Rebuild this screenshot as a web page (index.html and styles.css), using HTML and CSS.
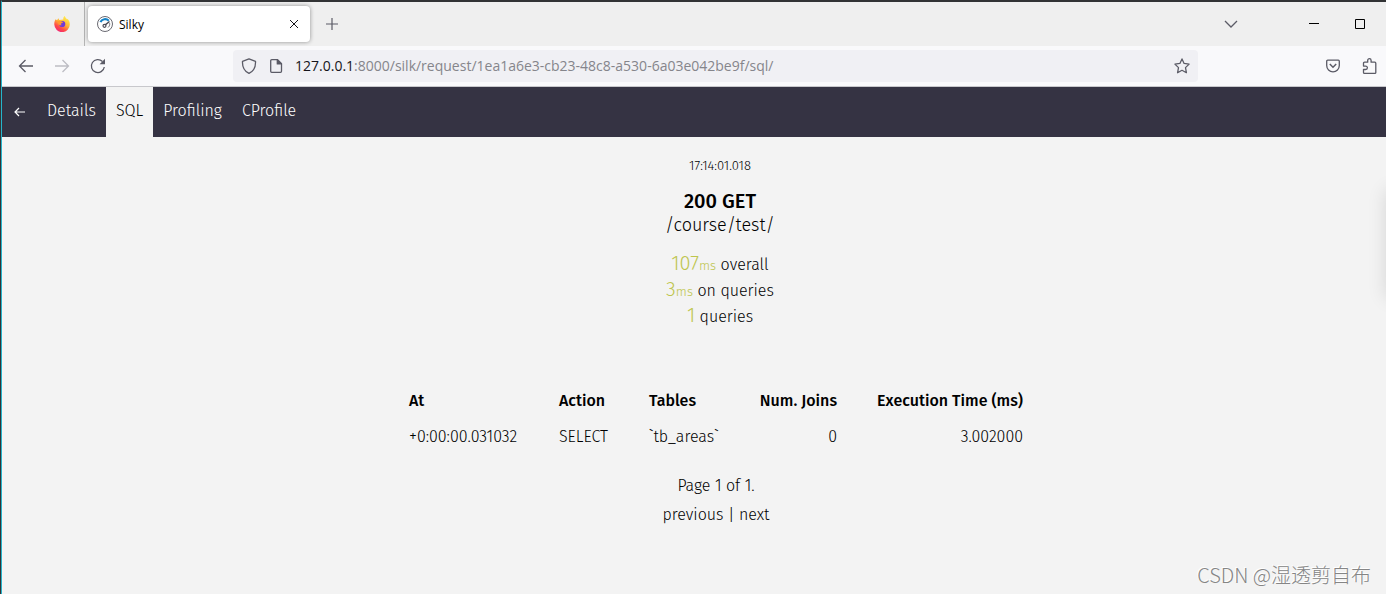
FILE: index.html
```html
<!DOCTYPE html>
<html lang="en">
<head>
  <meta charset="UTF-8">
  <meta name="viewport" content="width=device-width, initial-scale=1.0">
  <title>Silky</title>
  <link rel="stylesheet" href="styles.css">
</head>
<body>
  <div class="window">
    <div class="tab-strip">
      <div class="pinned">
        <svg width="16" height="16" viewBox="0 0 16 16">
          <defs>
            <linearGradient id="flame" x1="0.85" y1="0.05" x2="0.3" y2="1">
              <stop offset="0" stop-color="#fff44f"/>
              <stop offset="0.45" stop-color="#ffb436"/>
              <stop offset="0.75" stop-color="#ff4a48"/>
              <stop offset="1" stop-color="#f0287a"/>
            </linearGradient>
          </defs>
          <path fill="url(#flame)" d="M1.600 3.200 3 4.300 4.400 2.200 5.300 4l4-.6C9.200 2 9.600.8 10.800 0c.4 1.500 1.300 2.300 2.200 3.300l.8-.3c1.300 1.600 2 3.300 2 5.200A7.700 7.700 0 0 1 .3 8.600C.2 6.600.7 4.700 1.600 3.200Z"/>
          <circle cx="8.200" cy="8" r="3.100" fill="#7139d9"/>
          <path fill="#ff9a2e" d="M3.600 5.200c1.400-.8 2.700-.7 4 .3l1.500.4c-.2.9-1.100 1-1.800 1.400-.7.500-.5 1.400.6 1.800-1.800.7-3.700-.1-4.300-3.900Z"/>
        </svg>
      </div>
      <div class="tab">
        <svg width="18" height="18" viewBox="0 0 18 18" fill="none">
          <circle cx="9" cy="9" r="7.500" stroke="#6a6a72"/>
          <path d="M4.500 7.200c1.200-3.300 5.800-4 8.300-1.500" stroke="#1583c7" stroke-width="2.200"/>
          <path d="m9.200 9.900 4.300-3.400" stroke="#4a4a55" stroke-width="1.400"/>
          <path d="M13.700 8.200c.2 1.900-.5 3.300-1.700 4.300" stroke="#6a6a72"/>
          <circle cx="8.500" cy="10.800" r="1.500" stroke="#4a4a55" stroke-width="1.200"/>
        </svg>
        <span class="tab-title">Silky</span>
        <button class="icon-btn" aria-label="Close tab">
          <svg width="10" height="10" viewBox="0 0 10 10"><path d="m1 1 8 8M9 1 1 9" stroke="#15141a"/></svg>
        </button>
      </div>
      <button class="icon-btn new-tab" aria-label="New tab">
        <svg width="12" height="12" viewBox="0 0 12 12"><path d="M6 0v12M0 6h12" stroke="#5b5b66" stroke-width="1.200"/></svg>
      </button>
      <div class="window-controls">
        <button class="icon-btn" aria-label="List all tabs">
          <svg width="14" height="14" viewBox="0 0 14 14" fill="none"><path d="m1 4 6 6 6-6" stroke="#5b5b66" stroke-width="1.300"/></svg>
        </button>
        <button class="icon-btn minimize" aria-label="Minimize">
          <svg width="10" height="10" viewBox="0 0 10 10"><path d="M0 4.500h10" stroke="#000"/></svg>
        </button>
        <button class="icon-btn" aria-label="Maximize">
          <svg width="10" height="10" viewBox="0 0 10 10" fill="none"><path d="M.5.5h9v9h-9z" stroke="#000"/></svg>
        </button>
      </div>
    </div>

    <div class="toolbar">
      <div class="history">
        <button class="icon-btn" aria-label="Back">
          <svg width="16" height="16" viewBox="0 0 16 16" fill="none" stroke="#5b5b66" stroke-width="1.300"><path d="M15 8H1.500M7.500 2l-6 6 6 6"/></svg>
        </button>
        <button class="icon-btn" aria-label="Forward" disabled>
          <svg width="16" height="16" viewBox="0 0 16 16" fill="none" stroke="#bdbdc3" stroke-width="1.300"><path d="M1 8h13.500M8.500 2l6 6-6 6"/></svg>
        </button>
        <button class="icon-btn" aria-label="Reload">
          <svg width="16" height="16" viewBox="0 0 16 16" fill="none"><path d="M14.300 9A6.500 6.500 0 1 1 12.500 3.500" stroke="#5b5b66" stroke-width="1.300"/><path d="M15 .8v5.400H9.600z" fill="#5b5b66"/></svg>
        </button>
      </div>
      <div class="url-bar">
        <svg width="16" height="16" viewBox="0 0 16 16" fill="none" stroke="#5b5b66" stroke-width="1.300" stroke-linejoin="round"><path d="M8 .8 14.500 3.300c.3 5.400-1.800 9.800-6.500 12.100C3.300 13.100 1.200 8.700 1.500 3.300Z"/></svg>
        <svg width="14" height="14" viewBox="0 0 14 14" fill="none" stroke="#5b5b66" stroke-width="1.300" stroke-linejoin="round"><path d="M2.700.7h5.800l4 4v7.600a1 1 0 0 1-1 1H2.700a1 1 0 0 1-1-1V1.700a1 1 0 0 1 1-1Z"/><path d="M8.300.8v4.100h4.200z" fill="#5b5b66"/></svg>
        <a class="url" href="#"><span class="host">127.0.0.1</span>:8000/silk/request/1ea1a6e3-cb23-48c8-a530-6a03e042be9f/sql/</a>
        <button class="icon-btn" aria-label="Bookmark this page">
          <svg width="16" height="16" viewBox="0 0 16 16" fill="none" stroke="#5b5b66" stroke-width="1.300" stroke-linejoin="round"><path d="m8 .9 2.100 4.500 5 .7-3.600 3.500.9 5.100L8 12.300l-4.400 2.400.9-5.100L.9 6.100l5-.7z"/></svg>
        </button>
      </div>
      <div class="extras">
        <button class="icon-btn" aria-label="Save to Pocket">
          <svg width="14" height="14" viewBox="0 0 14 14" fill="none" stroke="#5b5b66" stroke-width="1.300"><path d="M1.700 1.200h10.600a1 1 0 0 1 1 1v4.300a6.300 6.300 0 0 1-12.600 0V2.200a1 1 0 0 1 1-1Z"/><path d="M3.800 5 7 8.200 10.200 5" stroke-width="1.500"/></svg>
        </button>
        <button class="icon-btn" aria-label="Extensions">
          <svg width="16" height="16" viewBox="0 0 16 16" fill="none" stroke="#5b5b66" stroke-width="1.300" stroke-linejoin="round"><path d="M5.700 4.200V2.400a1.700 1.700 0 0 1 3.400 0v1.800h3.700a1 1 0 0 1 1 1v9.200a1 1 0 0 1-1 1H2.500a1 1 0 0 1-1-1v-2.900h2.200a1.700 1.700 0 0 0 0-3.400H1.500V5.200a1 1 0 0 1 1-1Z"/></svg>
        </button>
      </div>
    </div>

    <nav class="menu">
      <a href="#" aria-label="Back to requests">
        <svg width="15" height="10" viewBox="0 0 15 10" fill="none" stroke="#fff" stroke-width="1.200"><path d="M13 5H3M7 1 3 5l4 4"/></svg>
      </a>
      <a href="#">Details</a>
      <a href="#" class="selected">SQL</a>
      <a href="#">Profiling</a>
      <a href="#">CProfile</a>
    </nav>

    <main>
      <div class="summary">
        <div class="time">17:14:01.018</div>
        <div class="method">200 GET</div>
        <div class="path">/course/test/</div>
        <div class="metric"><span class="numeric">107</span><span class="unit">ms</span> overall</div>
        <div class="metric"><span class="numeric">3</span><span class="unit">ms</span> on queries</div>
        <div class="metric"><span class="numeric">1</span> queries</div>
      </div>

      <div class="queries">
        <table>
          <thead>
            <tr>
              <th class="col-at">At</th>
              <th class="col-action">Action</th>
              <th class="col-tables">Tables</th>
              <th class="col-joins right">Num. Joins</th>
              <th class="col-time right">Execution Time (ms)</th>
            </tr>
          </thead>
          <tbody>
            <tr>
              <td>+0:00:00.031032</td>
              <td>SELECT</td>
              <td>`tb_areas`</td>
              <td class="right">0</td>
              <td class="right">3.002000</td>
            </tr>
          </tbody>
        </table>
        <div class="pagination">
          <div>Page 1 of 1.</div>
          <div><a href="#">previous</a> | <a href="#">next</a></div>
        </div>
      </div>
    </main>
    <div class="side-panel"></div>
    <div class="watermark">CSDN @湿透剪自布</div>
  </div>
</body>
</html>
```
FILE: styles.css
```css
* {
  box-sizing: border-box;
}

body {
  margin: 0;
  background: #323335;
  font-family: "Fira Sans", "Noto Sans", sans-serif;
  font-weight: 300;
  color: #000;
}

a {
  color: inherit;
  text-decoration: none;
}

svg {
  display: block;
  flex-shrink: 0;
}

.window {
  position: relative;
  display: flex;
  flex-direction: column;
  min-height: 100vh;
  margin-left: 1px;
  border-top: 2px solid #323335;
  border-left: 1px solid #25b5cc;
  background: #f3f3f3;
  overflow: hidden;
}

.icon-btn {
  display: flex;
  align-items: center;
  justify-content: center;
  padding: 0;
  border: none;
  background: none;
}

/* Browser tabs */
.tab-strip {
  display: flex;
  align-items: center;
  height: 44px;
  background: #efefef;
}

.pinned {
  display: flex;
  align-items: center;
  justify-content: flex-end;
  width: 83px;
  height: 100%;
  padding-right: 14px;
  border-right: 1px solid #b4b4b4;
}

.tab {
  display: flex;
  align-items: center;
  gap: 5px;
  width: 222px;
  height: 36px;
  margin-left: 3px;
  padding: 0 11px 0 8px;
  border-radius: 4px;
  background: #fff;
  box-shadow: 0 0 4px rgba(0, 0, 0, 0.4);
}

.tab-title {
  flex: 1;
  font: 400 12px "Open Sans", sans-serif;
}

.new-tab {
  margin-left: 16px;
}

.window-controls {
  display: flex;
  align-items: center;
  gap: 36px;
  margin-left: auto;
  padding-right: 21px;
}

.minimize {
  margin-left: 35px;
}

/* Address bar */
.toolbar {
  display: flex;
  align-items: center;
  height: 41px;
  border-bottom: 1px solid #c8c8cc;
  background: #f9f9fb;
}

.history {
  display: flex;
  gap: 20px;
  width: 231px;
  padding-left: 16px;
}

.url-bar {
  display: flex;
  align-items: center;
  flex: 1;
  gap: 12px;
  height: 32px;
  padding: 0 8px;
  border-radius: 4px;
  background: #f0f0f4;
}

.url {
  flex: 1;
  font: 400 14px/20px "Open Sans", sans-serif;
  color: #85858b;
  white-space: nowrap;
}

.host {
  color: #15141a;
}

.extras {
  display: flex;
  align-items: center;
  justify-content: flex-end;
  gap: 22px;
  width: 188px;
  padding-right: 8px;
}

/* Silk menu */
.menu {
  display: flex;
  height: 50px;
  background: #353343;
  color: #fff;
  font-size: 16px;
  line-height: 48px;
}

.menu a {
  padding: 0 10px;
}

.menu svg {
  margin-top: 20px;
}

.menu .selected {
  background: #f3f3f3;
  color: #000;
}

main {
  flex: 1;
  font-size: 16px;
}

.summary {
  padding: 19px 0 0 52px;
  text-align: center;
}

.time {
  font-size: 13px;
  line-height: 20px;
}

.method {
  margin-top: 13px;
  font-size: 20px;
  font-weight: 500;
  line-height: 24px;
}

.path {
  margin-bottom: 15px;
  font-size: 18px;
  line-height: 24px;
}

.metric {
  line-height: 26px;
}

.numeric {
  font-size: 20px;
  line-height: 20px;
  color: #bec54d;
}

.unit {
  font-size: 13px;
  line-height: 20px;
  color: #bec54d;
}

.queries {
  padding: 52px 0 0 44px;
}

table {
  margin: 0 auto;
  border-collapse: collapse;
  table-layout: fixed;
  width: 654px;
}

th,
td {
  height: 36px;
  padding: 0 20px;
  text-align: left;
  white-space: nowrap;
}

th {
  font-weight: 500;
}

.right {
  text-align: right;
}

.col-at {
  width: 150px;
}

.col-action {
  width: 90px;
}

.col-tables {
  width: 110px;
}

.col-joins {
  width: 118px;
}

.pagination {
  margin-top: 17px;
  line-height: 29px;
  text-align: center;
}

/* Closed filter panel, only its shadow shows */
.side-panel {
  position: absolute;
  top: 188px;
  left: 100%;
  width: 200px;
  height: 108px;
  box-shadow: 0 0 18px rgba(0, 0, 0, 0.12);
}

.watermark {
  position: absolute;
  right: 15px;
  bottom: 6px;
  font: 300 20px/26px "Noto Sans CJK SC", sans-serif;
  color: #858585;
  text-shadow: -1px -1px 0 #fff;
}
```
